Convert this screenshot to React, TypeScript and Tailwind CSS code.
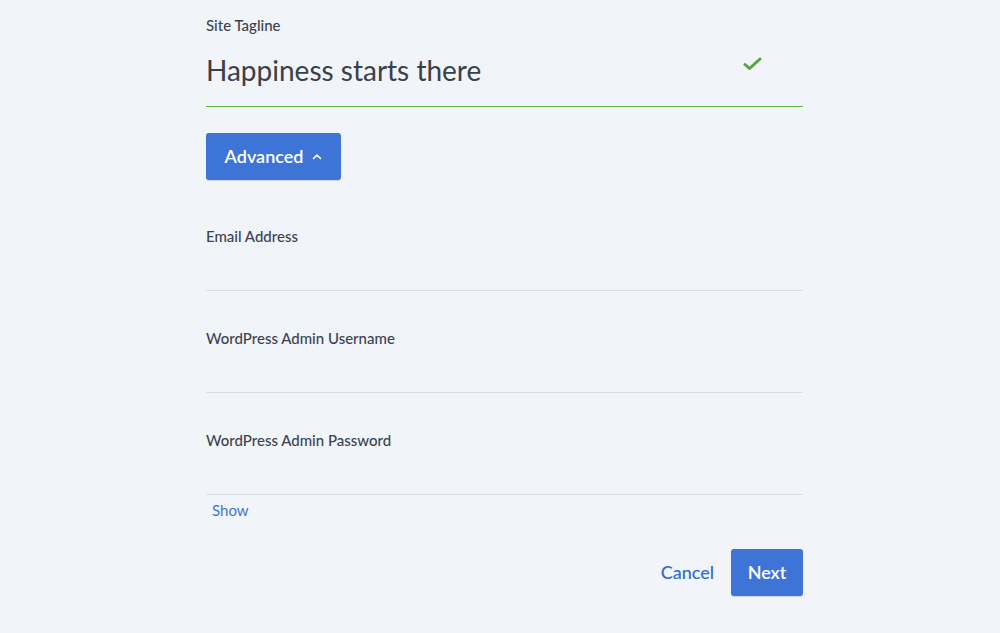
import React from "react";

const labelClass = "text-[15px] leading-[16px] font-medium text-[#3b4351]";

function Field({ label }: { label: string }) {
  return (
    <div className="flex flex-col">
      <label className={labelClass}>{label}</label>
      <div className="h-[47px] border-b border-b-[#d9dee5]" />
    </div>
  );
}

export default function App() {
  return (
    <div
      className="min-h-screen w-full bg-[#f1f4f9]"
      style={{ fontFamily: "Lato, 'Open Sans', sans-serif" }}
    >
      <div className="ml-[206px] w-[597px] pt-[17px] flex flex-col">
        {/* Site tagline */}
        <label className={labelClass}>Site Tagline</label>
        <div className="mt-[21px] flex items-center justify-between border-b border-b-[#5bb648] pb-[20px]">
          <span className="text-[28px] leading-[32px] font-normal text-[#3a404a]">
            Happiness starts there
          </span>
          <svg
            width="20"
            height="16"
            viewBox="0 0 20 16"
            className="mr-[40px] -mt-[12px]"
          >
            <path
              d="M2 8.5 L6.5 12.5 L17 3"
              fill="none"
              stroke="#52a83b"
              strokeWidth="3"
              strokeLinecap="round"
              strokeLinejoin="round"
            />
          </svg>
        </div>

        <div className="mt-[26px]">
          <button className="h-[47px] w-[135px] rounded-[3px] bg-[#3f74d7] text-white text-[18px] font-semibold flex items-center justify-center gap-[9px] shadow-[0_1px_1px_rgba(0,0,0,0.15)]">
            Advanced
            <svg width="10" height="7" viewBox="0 0 10 7">
              <path
                d="M1.5 5.5 L5 2 L8.5 5.5"
                fill="none"
                stroke="white"
                strokeWidth="1.6"
                strokeLinecap="round"
                strokeLinejoin="round"
              />
            </svg>
          </button>
        </div>

        <div className="mt-[48px] flex flex-col gap-[39px]">
          <Field label="Email Address" />
          <Field label="WordPress Admin Username" />
          <Field label="WordPress Admin Password" />
        </div>

        <button className="self-start mt-[6px] ml-[6px] text-[15px] leading-[18px] text-[#3f74d7]">
          Show
        </button>

        <div className="mt-[30px] flex items-center justify-end gap-[17px]">
          <button className="text-[18px] font-medium text-[#2f6bcf]">Cancel</button>
          <button className="h-[47px] w-[72px] rounded-[3px] bg-[#3f74d7] text-white text-[18px] font-semibold shadow-[0_1px_1px_rgba(0,0,0,0.15)]">
            Next
          </button>
        </div>
      </div>
    </div>
  );
}
